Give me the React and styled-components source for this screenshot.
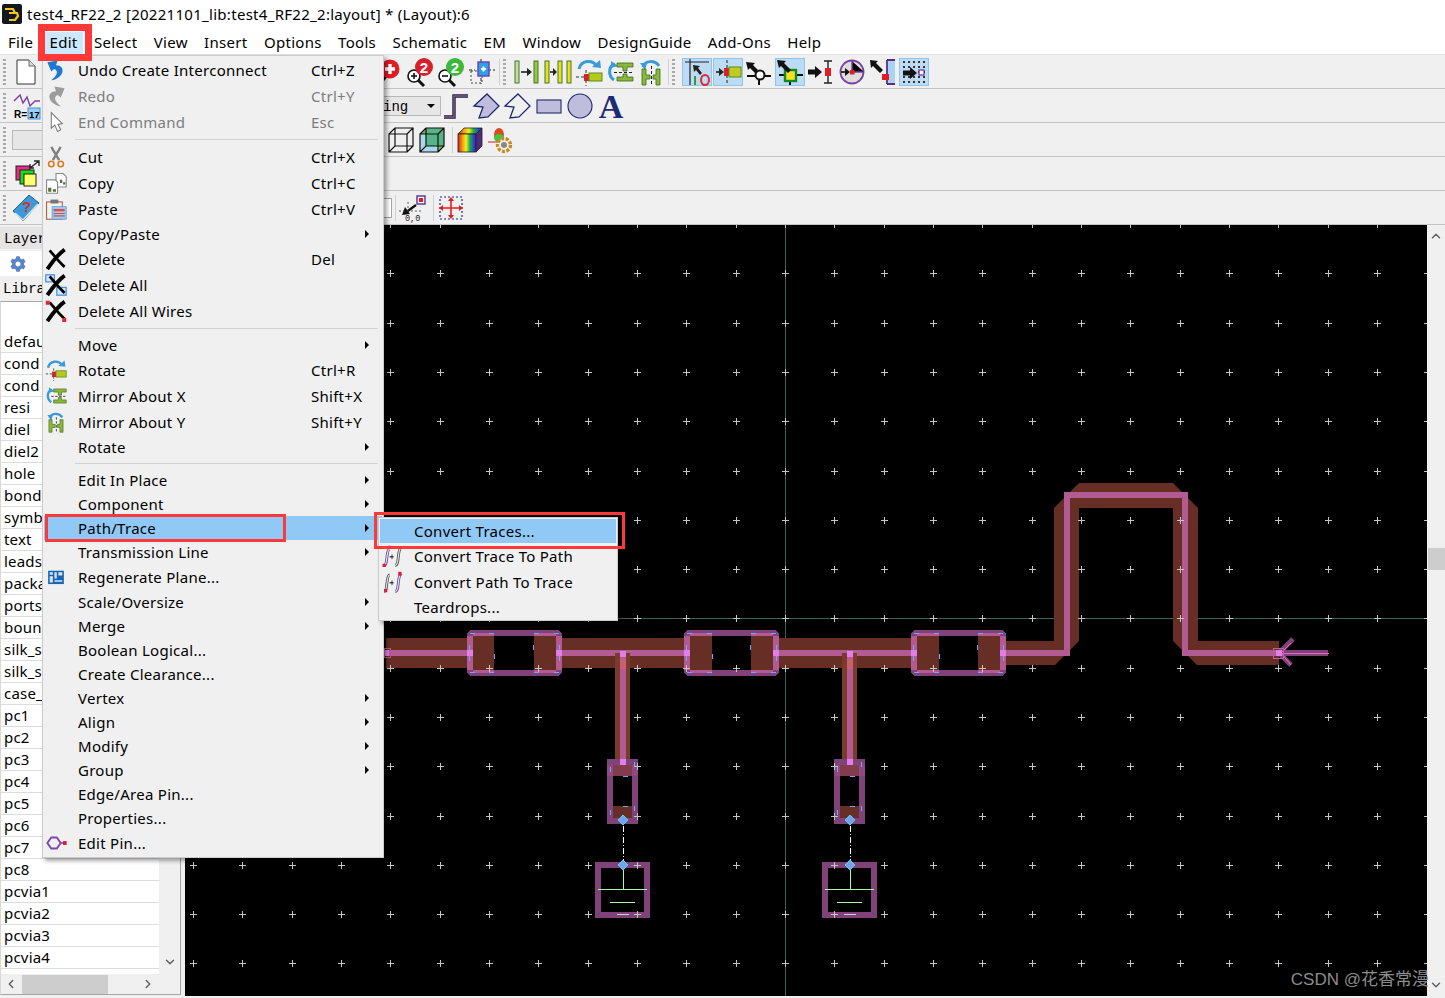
import React from 'react';
import styled, { createGlobalStyle } from 'styled-components';
import { ChevronUp, ChevronDown, ChevronLeft, ChevronRight } from 'lucide-react';
import { FaCog } from 'react-icons/fa';

const uiFont = `"Noto Sans", "Open Sans", sans-serif`;

const GlobalStyle = createGlobalStyle`
    html, body {
        margin: 0;
        padding: 0;
        background: #f0f0f0;
        overflow: hidden;
    }
`;

const Win = styled.div`
    position: relative;
    width: 1445px;
    height: 998px;
    overflow: hidden;
    background: #f0f0f0;
    color: #000;
    font-family: ${uiFont};
    font-size: 15px;
`;

const TitleBar = styled.div`
    height: 30px;
    box-sizing: border-box;
    background: #fff;
    display: flex;
    align-items: center;
    padding: 0 0 2px 2px;
    gap: 5px;
    font-size: 15px;
    letter-spacing: 0.29px;
    white-space: nowrap;
`;

const MenuBar = styled.div`
    height: 24px;
    background: #fff;
    border-bottom: 1px solid #e2e2e2;
    display: flex;
    align-items: center;
    padding-left: 3px;
    letter-spacing: 0.3px;
`;

const MenuBarItem = styled.div`
    height: 22px;
    line-height: 20px;
    margin-top: 1px;
    padding: 0 5px;
    margin-right: 6.35px;
    box-sizing: border-box;
    background: ${(p) => (p.$active ? '#cce8ff' : 'transparent')};
`;

const ToolRow = styled.div`
    height: 33px;
    border-bottom: 1px solid #c4c4c4;
    display: flex;
    align-items: center;
    gap: 3px;
    padding-left: 3px;
`;

const Grip = styled.div`
    width: 3px;
    height: 26px;
    flex: none;
    background: repeating-linear-gradient(to bottom, #a8a8a8 0 2px, transparent 2px 4px);
`;

const Spacer = styled.div`
    flex: none;
    width: ${(p) => p.$w}px;
`;

const RowSep = styled.div`
    flex: none;
    width: 1px;
    height: ${(p) => p.$h || 26}px;
    background: #cfcfcf;
`;

const ToolBtn = styled.div`
    flex: none;
    width: 28px;
    height: 28px;
    display: flex;
    align-items: center;
    justify-content: center;
    position: relative;

    ${(p) => p.$on && `
        &::before {
            content: '';
            position: absolute;
            inset: 0 -1px;
            background: #bddcf4;
            border: 1px solid #8fc4ee;
        }
        & > svg { position: relative; }
    `}
`;

const Glyph = styled.svg`
    display: block;
    flex: none;
    overflow: visible;
    width: ${(p) => p.$size || 28}px;
    height: ${(p) => p.$size || 28}px;
`;

const Combo = styled.div`
    flex: none;
    width: ${(p) => p.$w}px;
    height: 20px;
    margin-right: ${(p) => p.$tuck || 0}px;
    box-sizing: border-box;
    background: #e6e6e6;
    border: 1px solid #b8b8b8;
    display: flex;
    align-items: center;
    justify-content: ${(p) => (p.$plain ? 'flex-start' : 'flex-end')};
    padding: 0 4px;
    font-family: "Liberation Mono", monospace;
    font-size: 14px;
`;

const ComboText = styled.span`
    margin-right: auto;
    padding: 2px 0 0 41px;
`;

const ComboArrow = styled.span`
    width: 0;
    height: 0;
    border-left: 4px solid transparent;
    border-right: 4px solid transparent;
    border-top: 4px solid #000;
    margin-right: 1px;
`;

const CheckBox = styled.div`
    flex: none;
    width: 14px;
    height: 20px;
    box-sizing: border-box;
    background: #fff;
    border: 1px solid #a8a8a8;
`;

const Workspace = styled.div`
    display: flex;
    height: 773px;
`;

const LeftPanel = styled.div`
    flex: none;
    width: 181px;
    display: flex;
    flex-direction: column;
    height: 769px;
    margin-top: 1px;
`;

const DockHead = styled.div`
    height: 22px;
    box-sizing: border-box;
    margin-top: 1px;
    padding: 2px 0 0 4px;
    background: #e4e4e4;
    display: flex;
    align-items: center;
    font-family: "Liberation Mono", monospace;
    font-size: 14px;
`;

const GearRow = styled.div`
    height: 25px;
    margin-top: 2px;
    background: #fff;
    display: flex;
    align-items: center;
    padding-left: 10px;
    color: #5a84c8;
`;

const LibHead = styled.div`
    height: 25px;
    display: flex;
    align-items: center;
    padding-left: 3px;
    font-family: "Liberation Mono", monospace;
    font-size: 14px;
`;

const ListBox = styled.div`
    flex: 1;
    display: flex;
    flex-direction: column;
    box-sizing: border-box;
    border: 1px solid #a6a6a6;
    border-left-color: #d8d8d8;
    min-height: 0;
`;

const ListBody = styled.div`
    flex: 1;
    display: flex;
    min-height: 0;
`;

const ListItems = styled.div`
    width: 158px;
    flex: none;
    background: #fff;
    padding: 29px 0 0 0;
    box-sizing: border-box;
    overflow: hidden;
`;

const ListItem = styled.div`
    height: 22px;
    box-sizing: border-box;
    border-bottom: 1px solid #dcdcdc;
    line-height: 20px;
    padding-left: 3px;
    font-size: 15px;
    letter-spacing: 0.2px;
`;

const ListScroll = styled.div`
    flex: 1;
    display: flex;
    flex-direction: column;
    justify-content: flex-end;
    align-items: center;
    padding-bottom: 5px;
    color: #606060;
`;

const HScroll = styled.div`
    height: 20px;
    flex: none;
    display: flex;
    align-items: center;
    color: #606060;
    padding-left: 3px;
`;

const HThumb = styled.div`
    width: 86px;
    height: 19px;
    background: #cdcdcd;
    margin: 0 33px 0 4px;
`;

const Gutter = styled.div`
    flex: none;
    width: 4px;
`;

const Canvas = styled.div`
    flex: none;
    width: 1242px;
    height: 771px;
    background: #000;
`;

const Board = styled.svg`
    display: block;
    width: 1242px;
    height: 771px;
`;

const VScroll = styled.div`
    flex: 1;
    height: 771px;
    display: flex;
    flex-direction: column;
    align-items: center;
    justify-content: space-between;
    padding: 4px 0;
    box-sizing: border-box;
    position: relative;
    color: #606060;
`;

const VThumb = styled.div`
    position: absolute;
    left: 1px;
    right: 0;
    top: 323px;
    height: 22px;
    background: #cdcdcd;
`;

const PopMenu = styled.div`
    position: absolute;
    left: ${(p) => p.$x}px;
    top: ${(p) => p.$y}px;
    width: ${(p) => p.$w}px;
    box-sizing: border-box;
    background: #f0f0f0;
    border: 1px solid #cbcbcb;
    padding: 1px;
    box-shadow: 3px 3px 4px rgba(0, 0, 0, 0.35);
    white-space: nowrap;
`;

const MenuRow = styled.div`
    height: ${(p) => (p.$icon ? 26 : 24)}px;
    display: grid;
    grid-template-columns: 34px 233px 54px 8px;
    align-items: center;
    color: ${(p) => (p.$off ? '#7d7d7d' : '#000')};
    background: ${(p) => (p.$hot ? '#90c8f6' : 'transparent')};
`;

const SubRow = styled(MenuRow)`
    grid-template-columns: 34px 1fr;
`;

const IconSlot = styled.div`
    display: flex;
    align-items: center;
    padding-left: 1px;
`;

const RowText = styled.span`
    letter-spacing: 0.27px;
    padding-bottom: 1px;
`;

const Caret = styled.span`
    width: 0;
    height: 0;
    border-top: 4px solid transparent;
    border-bottom: 4px solid transparent;
    border-left: 4px solid #000;
`;

const MenuSep = styled.div`
    height: 9px;
    display: flex;
    align-items: center;
    padding-left: 31px;
    padding-right: 4px;

    &::after {
        content: '';
        flex: 1;
        height: 1px;
        background: #d2d2d2;
    }
`;

const RedBox = styled.div`
    position: absolute;
    left: ${(p) => p.$x}px;
    top: ${(p) => p.$y}px;
    width: ${(p) => p.$w}px;
    height: ${(p) => p.$h}px;
    box-sizing: border-box;
    border: ${(p) => p.$t}px solid #ff3838;
    pointer-events: none;
`;

const Watermark = styled.div`
    position: absolute;
    right: 16px;
    bottom: 8px;
    color: #8c8c8c;
    font-family: "Liberation Sans", "Noto Sans CJK SC", sans-serif;
    font-size: 17px;
    white-space: nowrap;
`;

const G = ({ size = 28, children }) => (
    <Glyph $size={size} viewBox="0 0 28 28">{children}</Glyph>
);

const AppLogo = () => (
    <Glyph $size={20} viewBox="0 0 20 20">
        <rect width="20" height="20" rx="2" fill="#14181c" />
        <path d="M3 5h8l2 4H7M7 9h8l1 3-3 4H7" fill="none" stroke="#f2c81e" strokeWidth="2.200" />
    </Glyph>
);

const Undo = ({ size, grey }) => (
    <G size={size}>
        <path
            d="M3 4 L16 2 L14 8 C23 8 25 16 19 22 C16 25 12 27 8 27 C14 22 17 18 14 14 C13 13 12 13 11 13 L8 16 Z"
            fill={grey ? '#9c9c9c' : '#1f78d1'}
            transform={grey ? 'matrix(-1 0 0 1 28 0)' : undefined}
        />
    </G>
);

const Pointer = ({ size }) => (
    <G size={size}><path d="M8 2 L8 22 L12.500 18 L16 26 L20 24 L16.500 17 L22 16 Z" fill="#fff" stroke="#7d7d7d" strokeWidth="1.400" /></G>
);

const Scissors = ({ size }) => (
    <G size={size}>
        <path d="M8 1 L18 18 M20 1 L10 18" stroke="#808080" strokeWidth="3" />
        <circle cx="8" cy="23" r="3.500" fill="none" stroke="#dc7a20" strokeWidth="2" />
        <circle cx="20" cy="23" r="3.500" fill="none" stroke="#dc7a20" strokeWidth="2" />
    </G>
);

const Copy = ({ size }) => (
    <G size={size}>
        <path d="M14 2h9l4 4v13H14z" fill="#fff" stroke="#8a8a8a" strokeWidth="1.400" />
        <path d="M2 10h11l3 3v14H2z" fill="#fff" stroke="#8a8a8a" strokeWidth="1.400" />
        <path d="M4 20h4v5H4zM10 22h4v3h-4zM19 10h3v4h-3zM23 13h3v3h-3z" fill="#56703e" />
    </G>
);

const Paste = ({ size }) => (
    <G size={size}>
        <rect x="2" y="5" width="20" height="22" fill="#f4f4f4" stroke="#a5643c" strokeWidth="1.400" />
        <rect x="7" y="2" width="10" height="5" fill="#777" />
        <rect x="9" y="11" width="18" height="16" fill="#9cc9ef" stroke="#5f9fd8" />
        <path d="M11 14h14v3H11zM11 19h14v1.500H11zM11 22h14v1.500H11z" fill="#e24a4a" />
    </G>
);

const BigX = () => (
    <>
        <path d="M3 27 C9 18 15 9 25 2" stroke="#000" strokeWidth="5" fill="none" />
        <path d="M6 3 C12 10 18 18 25 24" stroke="#000" strokeWidth="3.500" fill="none" />
    </>
);

const Cross = ({ size }) => <G size={size}><BigX /></G>;

const CrossAll = ({ size }) => (
    <G size={size}>
        <rect x="1" y="1" width="11" height="9" fill="#cfe6fa" stroke="#3c8fd8" strokeWidth="1.500" />
        <rect x="15" y="17" width="12" height="10" fill="#cfe6fa" stroke="#3c8fd8" strokeWidth="1.500" />
        <BigX />
    </G>
);

const CrossWires = ({ size }) => (
    <G size={size}>
        <BigX />
        <path d="M1 1h5v5H1zM22 23h5v5h-5z" fill="#e8203c" />
    </G>
);

const Rotate = ({ size }) => (
    <G size={size}>
        <path d="M4 11 C6 2 17 1 22 8" fill="none" stroke="#3b9ad8" strokeWidth="3" />
        <path d="M17 9 L26 10 L25 2 Z" fill="#3b9ad8" />
        <path d="M11 12v16M1 19h8" stroke="#333" strokeWidth="1" strokeDasharray="3 2" />
        <rect x="9" y="16" width="5" height="7" fill="#d8202c" />
        <rect x="14" y="15" width="13" height="8" fill="#b8c820" stroke="#5a8a22" />
    </G>
);

const Mirror = ({ size, flip }) => (
    <G size={size}>
        <g transform={flip ? 'matrix(0 1 1 0 0 0)' : undefined}>
            <path d="M9 6 C2 8 2 18 8 22" fill="none" stroke="#3b9ad8" strokeWidth="3" />
            <path d="M5 3 L12 8 L5 10 Z" fill="#3b9ad8" />
            <path d="M11 5h16v4h-6v4h-4V9h-6zM11 23h16v-4h-6v-3h-4v3h-6z" fill="#8ab83a" stroke="#3d6a20" strokeWidth="0.800" />
            <path d="M8 14.500h20" stroke="#222" strokeDasharray="3 2" />
        </g>
    </G>
);

const Regen = ({ size }) => (
    <G size={size}>
        <rect x="4" y="6" width="20" height="17" fill="#1c64ae" />
        <path d="M6 8h4v3H6zM12 8h3v8h-3zM17 8h5v4h-5zM6 13h4v8H6zM12 18h10v2H12z" fill="#cfe6fa" />
    </G>
);

const PinIcon = ({ size }) => (
    <G size={size}>
        <path d="M3 14 L8 7 H15 L20 14 L15 21 H8 Z" fill="none" stroke="#7d46a8" strokeWidth="2.400" />
        <path d="M20 14h4" stroke="#a04070" strokeWidth="2" />
        <rect x="23" y="11.500" width="4.500" height="5" fill="#e0183c" />
    </G>
);

const TraceSwap = ({ size, rev }) => (
    <G size={size}>
        <path d="M4 26 C9 26 6 6 11 5" fill="none" stroke={rev ? '#555' : '#6a4aa0'} strokeWidth="3.600" />
        <path d="M4 26 C9 26 6 6 11 5" fill="none" stroke="#e8e8e8" strokeWidth="1.400" />
        <path d="M18 26 C24 26 20 6 26 3" fill="none" stroke={rev ? '#6a4aa0' : '#555'} strokeWidth="3.600" />
        <path d="M18 26 C24 26 20 6 26 3" fill="none" stroke="#e8e8e8" strokeWidth="1.400" />
        <path d="M11 15h5" stroke="#222" strokeWidth="1.500" />
        <path d="M14 12v6" stroke="#222" />
        <path d={rev ? 'M22 1h4v5h-4zM4 23h4v4H4z' : 'M2 24h4v4H2zM9 1h4v4H9z'} fill="#e0183c" />
    </G>
);

const Doc = () => (
    <G>
        <path d="M5 2h12l6 6v18H5z" fill="#fff" stroke="#333" strokeWidth="1" />
        <path d="M17 2v6h6" fill="#ddd" stroke="#666" strokeWidth="1" />
    </G>
);

const Meas = () => (
    <G>
        <path d="M1 8 L7 2 L10 10 L14 4 L17 13 L22 8 L27 8" transform="translate(0 1)" fill="none" stroke="#7b3fa0" strokeWidth="1.400" />
        <text x="1" y="26" fontFamily="Liberation Sans" fontWeight="700" fontSize="10">R=</text>
        <rect x="15" y="16" width="12" height="11" fill="#9ccdf2" stroke="#3c8fd8" />
        <text x="16" y="25.500" fontFamily="Liberation Sans" fontWeight="700" fontSize="9.500">17</text>
    </G>
);

const Layers = () => (
    <G>
        <rect x="4" y="6" width="14" height="14" fill="#f0268c" stroke="#222" />
        <rect x="8" y="10" width="14" height="14" fill="#14e014" stroke="#222" />
        <rect x="12" y="14" width="12" height="12" fill="#ffff70" stroke="#222" />
        <path d="M18 8 L27 1 M22 1h5v5M18 4v4h4" fill="none" stroke="#222" strokeWidth="1.300" />
    </G>
);

const Book = () => (
    <G>
        <path d="M1 17 L17 1 L27 9 L11 27 Z" fill="#3d98d6" stroke="#24628f" />
        <path d="M3 19 L11 26 L26 10" fill="none" stroke="#cfe6fa" strokeWidth="1.500" />
        <text x="10" y="18" fontFamily="Liberation Sans" fontWeight="700" fontSize="15" fill="#d83030">?</text>
    </G>
);

const ZoomRed = () => (
    <G>
        <path d="M12 17 L4 27" stroke="#111" strokeWidth="3" />
        <circle cx="15" cy="11" r="9.500" fill="#e01c24" />
        <path d="M15 6v10M10 11h10" stroke="#fff" strokeWidth="3.400" />
    </G>
);

const Zoom2 = ({ color, sign }) => (
    <G>
        <path d="M12 22 L18 28" stroke="#111" strokeWidth="3" />
        <circle cx="8" cy="18" r="6" fill="#fff" stroke="#111" strokeWidth="1.600" />
        <path d={sign === '+' ? 'M5 18h6M8 15v6' : 'M5 18h6'} stroke="#111" strokeWidth="1.600" />
        <circle cx="18" cy="9" r="9" fill={color} />
        <text x="18" y="14.500" textAnchor="middle" fontFamily="Liberation Sans" fontWeight="700" fontSize="15" fill="#fff">2</text>
    </G>
);

const FitComp = () => (
    <G>
        <rect x="3" y="13" width="11" height="12" fill="none" stroke="#444" strokeDasharray="2 2" />
        <path d="M1 12h6M20 12h7M13 1v5M13 20v6" stroke="#222" strokeDasharray="3 2" />
        <rect x="10" y="4" width="11" height="14" fill="#2ca0e8" stroke="#6c3cb0" strokeWidth="1.400" />
        <path d="M13 11h5M15.500 8.500v5" stroke="#fff" strokeWidth="2" />
    </G>
);

const Bar = ({ x, h = 22, c = '#c8d020', y = 3 }) => (
    <rect x={x} y={y} width="4" height={h} fill={c} stroke="#2f6a20" strokeWidth="0.900" />
);

const Ins1 = () => (
    <G>
        <Bar x={2} c="#c8dca0" /><Bar x={21} c="#9cc83a" />
        <path d="M8 14h8" stroke="#222" strokeWidth="1.600" />
        <path d="M14 10l5 4-5 4z" fill="#222" />
    </G>
);

const Ins2 = () => (
    <G>
        <Bar x={1} c="#e8e020" /><Bar x={14} c="#e8e020" /><Bar x={23} c="#e8e020" />
        <path d="M6 14h4" stroke="#222" strokeWidth="1.600" />
        <path d="M9 10l4 4-4 4z" fill="#222" />
    </G>
);

const ArrowAt = ({ x = 1, y = 14 }) => (
    <g transform={`translate(${x} ${y})`}>
        <path d="M0 -2.500h7v-3.500l7 6-7 6v-3.500H0z" fill="#111" />
    </g>
);

const SnapEnd = () => (
    <G>
        <path d="M2 4h24M7 1v26" stroke="#222" strokeWidth="1.200" />
        <path d="M10 7l7 1-2 2 4 5-2 2-4-5-2 2z" fill="#222" />
        <path d="M12 18v9" stroke="#3a9a3a" strokeWidth="2" />
        <ellipse cx="22" cy="22" rx="4" ry="5" fill="none" stroke="#e0282c" strokeWidth="2" />
    </G>
);

const SnapCentre = () => (
    <G>
        <path d="M2 14h4" stroke="#222" strokeWidth="1.600" /><path d="M5 10l5 4-5 4z" fill="#222" />
        <path d="M13 2v24" stroke="#222" strokeDasharray="3 2" />
        <rect x="10" y="10" width="5" height="8" fill="#d8202c" />
        <rect x="15" y="9" width="12" height="10" fill="#c0cc20" stroke="#5a8a22" />
    </G>
);

const SnapPoint = () => (
    <G>
        <path d="M14 16v11M2 18h24" stroke="#111" strokeWidth="2" />
        <path d="M1 4l9 1-2 2 5 5-3 3-5-5-2 2z" fill="#111" />
        <circle cx="15" cy="17" r="4.500" fill="#fff" stroke="#111" strokeWidth="2" />
    </G>
);

const SnapSquare = () => (
    <G>
        <path d="M14 20v7M3 17h24" stroke="#111" strokeWidth="2" />
        <rect x="9" y="12" width="11" height="11" fill="#f8e020" stroke="#0c8a28" strokeWidth="2.400" />
        <path d="M1 2l9 1-2 2 7 7-3 3-7-7-2 2z" fill="#111" />
    </G>
);

const SnapBar = () => (
    <G>
        <path d="M17 3h8M21 3v22M17 25h8" stroke="#222" strokeWidth="1.400" />
        <ArrowAt x={1} y={14} />
        <rect x="18" y="10" width="6" height="8" fill="#e01c24" />
    </G>
);

const SnapCircle = () => (
    <G>
        <circle cx="14" cy="14" r="11.500" fill="#ddd" stroke="#7b3fa0" strokeWidth="1.800" />
        <path d="M14 3v11h12" stroke="#7b3fa0" strokeWidth="1.400" />
        <path d="M3 14h6" stroke="#111" strokeWidth="1.600" /><path d="M7 10l5 4-5 4z" fill="#111" />
        <rect x="12" y="12" width="4.500" height="4.500" fill="#e01c24" />
    </G>
);

const SnapGap = () => (
    <G>
        <path d="M18 2h8M18 26h8M18 2v24" stroke="#5a2c8c" strokeWidth="1.800" />
        <rect x="19" y="3" width="7" height="22" fill="#a8d4f2" />
        <path d="M1 2l8 1-2 2 7 7-3 3-7-7-2 2z" fill="#111" />
        <rect x="13" y="16" width="7" height="6" fill="#e01c24" />
    </G>
);

const SnapGrid = () => (
    <G>
        <path d="M3 4h23M3 9h23M3 14h23M3 19h23M3 24h23" stroke="#333" strokeWidth="2" strokeDasharray="2 3" />
        <ArrowAt x={3} y={15} />
        <rect x="19" y="12" width="5" height="5" fill="#fff" stroke="#6c2ca0" strokeWidth="1.200" />
    </G>
);

const StepLine = () => (
    <G>
        <path d="M2 25h10V4h14" fill="none" stroke="#222" strokeWidth="3.400" />
        <path d="M2 25h10V4h14" fill="none" stroke="#7b5ca8" strokeWidth="1.400" />
    </G>
);

const PolyFill = ({ hollow }) => (
    <G>
        <path
            d="M1 14 L14 2 L26 14 L15 25 L6 26 L10 15 Z"
            fill={hollow ? '#f0f0f0' : '#c0bcdc'}
            stroke="#1c2a6c"
            strokeWidth="1.300"
        />
    </G>
);

const RectFill = () => (
    <G><rect x="2" y="8" width="24" height="13" fill="#c0bcdc" stroke="#1c2a6c" strokeWidth="1.100" /></G>
);

const CircleFill = () => (
    <G><circle cx="14" cy="14" r="12" fill="#c0bcdc" stroke="#1c2a6c" strokeWidth="1.100" /></G>
);

const BigA = () => (
    <G>
        <text x="14" y="25.500" textAnchor="middle" fontFamily="Liberation Serif" fontWeight="700" fontSize="34" fill="#1c2a78">A</text>
    </G>
);

const WireCube = () => (
    <G>
        <path d="M2 8h18v18H2zM8 2h18v18H8zM2 8l6-6M20 8l6-6M2 26l6-6M20 26l6-6" fill="none" stroke="#111" strokeWidth="1.200" />
    </G>
);

const SolidCube = () => (
    <G>
        <path d="M8 2h18L20 8H2z" fill="#7ab648" />
        <path d="M20 8l6-6v18l-6 6z" fill="#8cc24c" />
        <path d="M2 8h18v18H2z" fill="#a8d8ec" />
        <path d="M8 2h18v18H8z" fill="#58b488" />
        <path d="M2 8h18v18H2zM8 2h18v18H8zM2 8l6-6M20 8l6-6M2 26l6-6M20 26l6-6" fill="none" stroke="#111" strokeWidth="1.200" />
    </G>
);

const RainbowCube = () => (
    <G>
        <defs>
            <linearGradient id="rb" x1="0" x2="1" y1="0" y2="0">
                <stop offset="0" stopColor="#e01c1c" />
                <stop offset=".25" stopColor="#f0a010" />
                <stop offset=".45" stopColor="#f0f020" />
                <stop offset=".65" stopColor="#20b040" />
                <stop offset=".85" stopColor="#2050d0" />
                <stop offset="1" stopColor="#6020a0" />
            </linearGradient>
        </defs>
        <path d="M2 8l6-6h18l-6 6z" fill="url(#rb)" stroke="#222" strokeWidth="0.800" />
        <rect x="2" y="8" width="18" height="18" fill="url(#rb)" stroke="#222" strokeWidth="0.800" />
        <path d="M20 8l6-6v18l-6 6z" fill="#50287c" stroke="#222" strokeWidth="0.800" />
    </G>
);

const SimGear = () => (
    <G>
        <ellipse cx="12" cy="9" rx="5" ry="7" fill="#d84a20" />
        <ellipse cx="12" cy="12" rx="5" ry="4" fill="#3cc83c" />
        <path d="M1 16h10" stroke="#d02020" />
        <circle cx="17" cy="19" r="6.500" fill="#f0f0f0" stroke="#c88a20" strokeWidth="3.400" strokeDasharray="3 1.500" />
        <circle cx="17" cy="19" r="3" fill="#888" />
    </G>
);

const ToOrigin = () => (
    <G>
        <rect x="18" y="2" width="8" height="8" fill="#fff" stroke="#5a2c8c" strokeWidth="1.400" />
        <rect x="20" y="4" width="4" height="4" fill="#e01c24" />
        <path d="M17 11 L6 19" stroke="#111" strokeWidth="2.400" />
        <path d="M3 21 L6 13 L11 20 Z" fill="#111" />
        <path d="M0 17h24M9 8v12" stroke="#333" strokeDasharray="2 2" strokeWidth="0.800" />
        <text x="6" y="26.500" fontFamily="Liberation Mono" fontSize="8.500" fill="#222">0,0</text>
    </G>
);

const FitAll = () => (
    <G>
        <rect x="3" y="3" width="22" height="22" fill="none" stroke="#1c2a9c" strokeDasharray="2 2" strokeWidth="1.200" />
        <path d="M14 5v18M4 14h20" stroke="#e01c24" strokeWidth="1.600" />
        <path d="M14 3l-3 4h6zM14 25l-3-4h6zM2 14l4-3v6zM26 14l-4-3v6z" fill="#e01c24" />
    </G>
);

const editRows = [
    { t: 'Undo Create Interconnect', k: 'Ctrl+Z', i: <Undo size={22} /> },
    { t: 'Redo', k: 'Ctrl+Y', i: <Undo size={22} grey />, off: true },
    { t: 'End Command', k: 'Esc', i: <Pointer size={22} />, off: true },
    'sep',
    { t: 'Cut', k: 'Ctrl+X', i: <Scissors size={22} /> },
    { t: 'Copy', k: 'Ctrl+C', i: <Copy size={22} /> },
    { t: 'Paste', k: 'Ctrl+V', i: <Paste size={22} /> },
    { t: 'Copy/Paste', sub: true },
    { t: 'Delete', k: 'Del', i: <Cross size={22} /> },
    { t: 'Delete All', i: <CrossAll size={22} /> },
    { t: 'Delete All Wires', i: <CrossWires size={22} /> },
    'sep',
    { t: 'Move', sub: true },
    { t: 'Rotate', k: 'Ctrl+R', i: <Rotate size={22} /> },
    { t: 'Mirror About X', k: 'Shift+X', i: <Mirror size={22} /> },
    { t: 'Mirror About Y', k: 'Shift+Y', i: <Mirror size={22} flip /> },
    { t: 'Rotate', sub: true },
    'sep',
    { t: 'Edit In Place', sub: true },
    { t: 'Component', sub: true },
    { t: 'Path/Trace', sub: true, hot: true },
    { t: 'Transmission Line', sub: true },
    { t: 'Regenerate Plane...', i: <Regen size={22} /> },
    { t: 'Scale/Oversize', sub: true },
    { t: 'Merge', sub: true },
    { t: 'Boolean Logical...' },
    { t: 'Create Clearance...' },
    { t: 'Vertex', sub: true },
    { t: 'Align', sub: true },
    { t: 'Modify', sub: true },
    { t: 'Group', sub: true },
    { t: 'Edge/Area Pin...' },
    { t: 'Properties...' },
    { t: 'Edit Pin...', i: <PinIcon size={22} /> },
];

const subRows = [
    { t: 'Convert Traces...', hot: true },
    { t: 'Convert Trace To Path', i: <TraceSwap size={22} /> },
    { t: 'Convert Path To Trace', i: <TraceSwap size={22} rev /> },
    { t: 'Teardrops...' },
];

const menuNames = ['File', 'Edit', 'Select', 'View', 'Insert', 'Options', 'Tools', 'Schematic', 'EM', 'Window', 'DesignGuide', 'Add-Ons', 'Help'];

const layerNames = [
    'default', 'cond', 'cond', 'resi', 'diel', 'diel2', 'hole', 'bond', 'symbol', 'text', 'leads',
    'package', 'ports', 'bound', 'silk_s', 'silk_s', 'case_',
    'pc1', 'pc2', 'pc3', 'pc4', 'pc5', 'pc6', 'pc7', 'pc8', 'pcvia1', 'pcvia2', 'pcvia3', 'pcvia4',
];

const BROWN = '#672e25';
const PINK = '#b25a92';
const PURPLE = '#7f4379';
const BRIGHT = '#e27ee8';
const BLUE = '#6fa8ff';

const GridCrosses = () => {
    const marks = [];
    for (let i = 0; i <= 25; i++) {
        for (let j = -1; j <= 14; j++) {
            const x = Math.round(193 + 49.34 * i);
            const y = Math.round(273.4 + 49.29 * j);
            marks.push(`M${x - 3} ${y + 0.5}h7M${x + 0.5} ${y - 3}v7`);
        }
    }
    return <path d={marks.join('')} stroke="#c6c6c6" strokeWidth="1" fill="none" />;
};

const HCap = ({ x0, x1, h0, h1 }) => (
    <g>
        <rect x={x0 + 6} y={636} width={h0 - x0 - 6} height={34} fill={BROWN} />
        <rect x={h1} y={636} width={x1 - 6 - h1} height={34} fill={BROWN} />
        <path
            d={`M${x0 + 5} 633H${x1 - 5}L${x1 - 3} 635V671L${x1 - 5} 673H${x0 + 5}L${x0 + 3} 671V635Z`}
            fill="none"
            stroke={PURPLE}
            strokeWidth="6"
        />
        <rect x={x0} y={636} width={6} height={34} fill={PINK} />
        <rect x={x1 - 6} y={636} width={6} height={34} fill={PINK} />
        <rect x={x0 + 6} y={633} width={h0 - x0 - 6} height={3} fill={PINK} />
        <rect x={h1} y={633} width={x1 - 6 - h1} height={3} fill={PINK} />
        <rect x={x0 + 6} y={670} width={h0 - x0 - 6} height={3} fill={PINK} />
        <rect x={h1} y={670} width={x1 - 6 - h1} height={3} fill={PINK} />
        <rect x={x0} y={650} width={6} height={6} fill={BRIGHT} />
        <rect x={x1 - 6} y={650} width={6} height={6} fill={BRIGHT} />
        <path
            d={`M${x0 + 3} 633.500h5M${h0 - 5} 633.500h5M${h1} 633.500h5M${x1 - 8} 633.500h5M${x0 + 3} 672.500h5M${h0 - 5} 672.500h5M${h1} 672.500h5M${x1 - 8} 672.500h5M${x0 + 2.500} 645v5M${x0 + 2.500} 656v5M${x1 - 2.500} 645v5M${x1 - 2.500} 656v5M${h0 + 0.500} 654v5M${h1 - 0.500} 645v5`}
            stroke={BLUE}
            strokeWidth="1"
        />
    </g>
);

const PinMark = ({ y }) => (
    <g>
        <path d={`M623 ${y - 5}L628 ${y}L623 ${y + 5}L618 ${y}Z`} fill="#7aa0e8" stroke="#40d8ff" strokeWidth="1" />
    </g>
);

const Stub = ({ dx }) => (
    <g transform={`translate(${dx} 0)`}>
        <rect x="615" y="653" width="15" height="106" fill="#7a3a2c" />
        <rect x="620" y="653" width="6" height="110" fill={PINK} />
        <rect x="620" y="651" width="6" height="6" fill={BRIGHT} />
        <rect x="620" y="659" width="6" height="10" fill="#c96070" />
        <rect x="610" y="765" width="25" height="11" fill={BROWN} />
        <rect x="610" y="806" width="25" height="12" fill={BROWN} />
        <path d="M610 762H635L635 821H610Z" fill="none" stroke={PURPLE} strokeWidth="6" />
        <rect x="607" y="765" width="31" height="11" fill={PINK} opacity="0.35" />
        <rect x="620" y="759" width="6" height="6" fill={BRIGHT} />
        <path d="M610.500 767v5M634.500 762v5M623 776.500h5M623 806.500h5M610.500 810v5M634.500 806v5" stroke={BLUE} strokeWidth="1" />
        <path d="M623 826v34" stroke="#fff" strokeDasharray="6 2 1 2" strokeWidth="1" shapeRendering="crispEdges" />
        <PinMark y={820} />
        <path d="M598 865H647V915H598Z" fill="none" stroke={PURPLE} strokeWidth="6" />
        <path d="M623 866v23.500M598 889.500h49M610 902.500h25" stroke="#a8ffa8" strokeWidth="1" />
        <path d="M617 914.500h12" stroke="#d8c8d8" strokeWidth="1" />
        <PinMark y={865} />
    </g>
);

const LayoutBoard = () => (
    <Board viewBox="185 225 1242 771" shapeRendering="crispEdges">
        <path d="M785.500 225V996M185 618.500H1427" stroke="#3d6259" strokeWidth="1" />

        <rect x="386" y="638" width="82" height="30" fill={BROWN} />
        <rect x="561" y="638" width="124" height="30" fill={BROWN} />
        <rect x="778" y="638" width="134" height="30" fill={BROWN} />
        <path
            d="M1004 641H1054V508L1079 483H1173L1198 508V641H1279V665H1197L1173 641V508H1079V641L1055 665H1004Z"
            fill={BROWN}
            shapeRendering="auto"
        />

        <path d="M1064 497l4-5h2v6h-6zM1188 497l-4-5h-2v6h6zM1064 652l4 4h2v-6h-6zM1188 652l-4 4h-2v-6h6z" fill={PURPLE} />
        <path d="M386 653H468M561 653H685M778 653H912M1004 653H1067V495H1185V653H1279" fill="none" stroke={PINK} strokeWidth="6" strokeLinejoin="miter" />

        <rect x="384.500" y="648.500" width="6" height="9" fill="none" stroke={PINK} strokeWidth="1" />
        <rect x="385" y="650" width="4" height="6" fill={BRIGHT} />

        <HCap x0={467} x1={562} h0={494} h1={534} />
        <HCap x0={684} x1={779} h0={712} h1={751} />
        <HCap x0={911} x1={1006} h0={939} h1={978} />

        <Stub dx={0} />
        <Stub dx={227} />

        <rect x="1279" y="650" width="49" height="6" fill={PURPLE} />
        <path d="M1279 653L1293 639M1279 653L1291 665" stroke={PURPLE} strokeWidth="5" shapeRendering="auto" />
        <path d="M1279 653.500H1329M1281 653L1291 643M1281 653L1291 665" stroke="#e868c0" strokeWidth="1" shapeRendering="auto" />
        <rect x="1273.500" y="648.500" width="10" height="10" fill="none" stroke="#c05ca0" strokeWidth="1" />
        <rect x="1276" y="650" width="6" height="6" fill={BRIGHT} />

        <GridCrosses />
    </Board>
);

const Tool = ({ on, children }) => <ToolBtn $on={on}>{children}</ToolBtn>;

const App = () => {
    return (
        <Win>
            <GlobalStyle />
            <TitleBar>
                <AppLogo />
                <span>test4_RF22_2 [20221101_lib:test4_RF22_2:layout] * (Layout):6</span>
            </TitleBar>
            <MenuBar>
                {menuNames.map((name) => (
                    <MenuBarItem key={name} $active={name === 'Edit'}>{name}</MenuBarItem>
                ))}
            </MenuBar>

            <ToolRow>
                <Grip />
                <Spacer $w={0} />
                <Tool><Doc /></Tool>
                <Spacer $w={329} />
                <Tool><ZoomRed /></Tool>
                <Tool><Zoom2 color="#d8202c" sign="+" /></Tool>
                <Tool><Zoom2 color="#3cb83c" sign="-" /></Tool>
                <Tool><FitComp /></Tool>
                <RowSep />
                <Grip />
                <Spacer $w={1} />
                <Tool><Ins1 /></Tool>
                <Tool><Ins2 /></Tool>
                <Tool><Rotate /></Tool>
                <Tool><Mirror /></Tool>
                <Tool><Mirror flip /></Tool>
                <RowSep />
                <Grip />
                <Spacer $w={2} />
                <Tool on><SnapEnd /></Tool>
                <Tool on><SnapCentre /></Tool>
                <Tool><SnapPoint /></Tool>
                <Tool on><SnapSquare /></Tool>
                <Tool><SnapBar /></Tool>
                <Tool><SnapCircle /></Tool>
                <Tool><SnapGap /></Tool>
                <Tool on><SnapGrid /></Tool>
            </ToolRow>

            <ToolRow>
                <Grip />
                <Spacer $w={1} />
                <Tool><Meas /></Tool>
                <Spacer $w={290} />
                <Combo $w={104} $tuck={-2}>
                    <ComboText>ing</ComboText>
                    <ComboArrow />
                </Combo>
                <Tool><StepLine /></Tool>
                <Tool><PolyFill /></Tool>
                <Tool><PolyFill hollow /></Tool>
                <Tool><RectFill /></Tool>
                <Tool><CircleFill /></Tool>
                <Tool><BigA /></Tool>
            </ToolRow>

            <ToolRow>
                <Grip />
                <Spacer $w={0} />
                <Combo $w={32} $plain />
                <Spacer $w={337} />
                <Tool><WireCube /></Tool>
                <Tool><SolidCube /></Tool>
                <Spacer $w={0} />
                <RowSep />
                <Tool><RainbowCube /></Tool>
                <Tool><SimGear /></Tool>
            </ToolRow>

            <ToolRow>
                <Grip />
                <Spacer $w={0} />
                <Tool><Layers /></Tool>
            </ToolRow>

            <ToolRow>
                <Grip />
                <Spacer $w={0} />
                <Tool><Book /></Tool>
                <Spacer $w={332} />
                <CheckBox />
                <RowSep />
                <Tool><ToOrigin /></Tool>
                <Spacer $w={0} />
                <RowSep />
                <Tool><FitAll /></Tool>
            </ToolRow>

            <Workspace>
                <LeftPanel>
                    <DockHead>Layers</DockHead>
                    <GearRow><FaCog size={16} /></GearRow>
                    <LibHead>Library</LibHead>
                    <ListBox>
                        <ListBody>
                            <ListItems>
                                {layerNames.map((n, idx) => <ListItem key={idx}>{n}</ListItem>)}
                            </ListItems>
                            <ListScroll><ChevronDown size={14} strokeWidth={2.5} /></ListScroll>
                        </ListBody>
                        <HScroll>
                            <ChevronLeft size={14} strokeWidth={2.5} />
                            <HThumb />
                            <ChevronRight size={14} strokeWidth={2.5} />
                        </HScroll>
                    </ListBox>
                </LeftPanel>
                <Gutter />
                <Canvas><LayoutBoard /></Canvas>
                <VScroll>
                    <ChevronUp size={14} strokeWidth={2.5} />
                    <VThumb />
                    <ChevronDown size={14} strokeWidth={2.5} />
                </VScroll>
            </Workspace>

            <Watermark>CSDN @花香常漫</Watermark>

            <PopMenu $x={42} $y={55} $w={342}>
                {editRows.map((r, idx) =>
                    r === 'sep' ? (
                        <MenuSep key={idx} />
                    ) : (
                        <MenuRow key={idx} $icon={!!r.i} $off={r.off} $hot={r.hot}>
                            <IconSlot>{r.i}</IconSlot>
                            <RowText>{r.t}</RowText>
                            <RowText>{r.k}</RowText>
                            {r.sub ? <Caret /> : <span />}
                        </MenuRow>
                    )
                )}
            </PopMenu>

            <PopMenu $x={378} $y={517} $w={240}>
                {subRows.map((r) => (
                    <SubRow key={r.t} $icon={!!r.i} $hot={r.hot}>
                        <IconSlot>{r.i}</IconSlot>
                        <RowText>{r.t}</RowText>
                    </SubRow>
                ))}
            </PopMenu>

            <RedBox $x={38} $y={24} $w={54} $h={37} $t={7} />
            <RedBox $x={45} $y={514} $w={241} $h={28} $t={3} />
            <RedBox $x={374} $y={512} $w={251} $h={37} $t={3} />
        </Win>
    );
};

export default App;
